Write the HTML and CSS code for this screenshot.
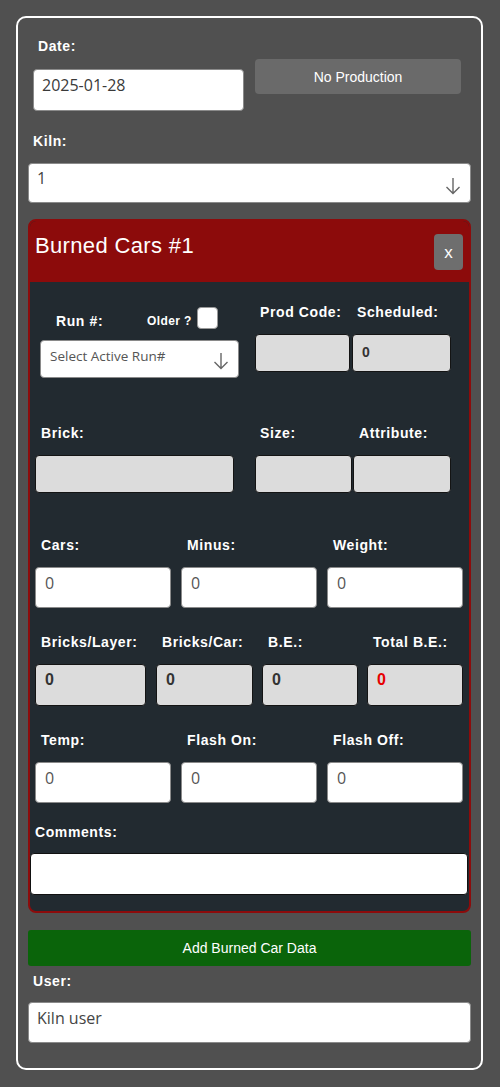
FILE: index.html
```html
<!DOCTYPE html>
<html>
<head>
<meta charset="utf-8">
<link rel="stylesheet" href="styles.css">
</head>
<body>
<div class="panel">
  <div class="date-row">
    <div class="date-col">
      <div class="lbl pad5">Date:</div>
      <div class="inp date-inp">2025-01-28</div>
    </div>
    <div class="noprod">No Production</div>
  </div>
  <div class="lbl kiln-lbl">Kiln:</div>
  <div class="inp sel kiln-sel"><span>1</span><svg class="arrow" width="16" height="18" viewBox="0 0 16 18"><path d="M8 1V16.5M1.5 10L8 16.5L14.5 10" fill="none" stroke="#666" stroke-width="1.4"/></svg></div>

  <div class="card">
    <div class="card-head">
      <div class="title">Burned Cars #1</div>
      <div class="close">x</div>
    </div>
    <div class="card-body">
      <div class="row run-row">
        <div class="run-col">
          <div class="run-head">
            <div class="lbl run-lbl">Run #:</div>
            <div class="older">Older ?</div>
            <div class="chk"></div>
          </div>
          <div class="inp sel run-sel"><span>Select Active Run#</span><svg class="arrow" width="16" height="18" viewBox="0 0 16 18"><path d="M8 1V16.5M1.5 10L8 16.5L14.5 10" fill="none" stroke="#666" stroke-width="1.4"/></svg></div>
        </div>
        <div class="fld prod">
          <div class="lbl pad5">Prod Code:</div>
          <div class="ro h38"></div>
        </div>
        <div class="fld sched">
          <div class="lbl pad5">Scheduled:</div>
          <div class="ro h38 val14">0</div>
        </div>
      </div>

      <div class="row brick-row">
        <div class="fld w199">
          <div class="lbl pad6">Brick:</div>
          <div class="ro h38"></div>
        </div>
        <div class="fld size">
          <div class="lbl pad5">Size:</div>
          <div class="ro h38"></div>
        </div>
        <div class="fld attr">
          <div class="lbl pad6">Attribute:</div>
          <div class="ro h38"></div>
        </div>
      </div>

      <div class="row three cars-row">
        <div class="fld w136">
          <div class="lbl pad6">Cars:</div>
          <div class="inp num">0</div>
        </div>
        <div class="fld w136">
          <div class="lbl pad6">Minus:</div>
          <div class="inp num">0</div>
        </div>
        <div class="fld w136">
          <div class="lbl pad6">Weight:</div>
          <div class="inp num">0</div>
        </div>
      </div>

      <div class="row bricks-row">
        <div class="fld b1">
          <div class="lbl pad6">Bricks/Layer:</div>
          <div class="ro h42 val15">0</div>
        </div>
        <div class="fld b2">
          <div class="lbl pad6">Bricks/Car:</div>
          <div class="ro h42 val15">0</div>
        </div>
        <div class="fld b3">
          <div class="lbl pad6">B.E.:</div>
          <div class="ro h42 val15">0</div>
        </div>
        <div class="fld b4">
          <div class="lbl pad6">Total B.E.:</div>
          <div class="ro h42 val15 red">0</div>
        </div>
      </div>

      <div class="row three temp-row">
        <div class="fld w136">
          <div class="lbl pad6">Temp:</div>
          <div class="inp num">0</div>
        </div>
        <div class="fld w136">
          <div class="lbl pad6">Flash On:</div>
          <div class="inp num">0</div>
        </div>
        <div class="fld w136">
          <div class="lbl pad6">Flash Off:</div>
          <div class="inp num">0</div>
        </div>
      </div>

      <div class="comments">
        <div class="lbl pad5">Comments:</div>
        <div class="inp com-inp"></div>
      </div>
    </div>
  </div>

  <div class="add-btn">Add Burned Car Data</div>
  <div class="lbl user-lbl">User:</div>
  <div class="inp user-inp">Kiln user</div>
</div>
</body>
</html>
```

FILE: styles.css
```css
* { box-sizing: border-box; }
html, body { margin: 0; padding: 0; }
body {
  background: #505050;
  width: 500px;
  height: 1087px;
  overflow: hidden;
  padding: 16px 0 0 16px;
  font-family: "Liberation Sans", Arial, sans-serif;
}
.panel {
  width: 467px;
  height: 1054px;
  border: 2px solid #fff;
  border-radius: 10px;
  padding: 21px 10px 0 10px;
}
.lbl {
  color: #fff;
  font-weight: bold;
  font-size: 14px;
  line-height: 15px;
  letter-spacing: 0.6px;
  white-space: nowrap;
}
.pad5 { padding-left: 5px; }
.pad6 { padding-left: 6px; }

.inp {
  background: #fff;
  border: 1px solid #8a8a8a;
  border-radius: 4px;
  font-family: "Open Sans", sans-serif;
  font-size: 16px;
  line-height: 22px;
  color: #444;
  padding: 4px 0 0 8px;
}
.date-row { display: flex; }
.date-col { margin-left: 5px; width: 211px; }
.date-col .lbl { margin-bottom: 15px; }
.date-inp { height: 42px; padding-left: 8px; color: #3a3a3a; }
.noprod {
  margin-left: 11px;
  margin-top: 20px;
  width: 206px;
  height: 35px;
  background: #6a6a6a;
  border-radius: 4px;
  color: #fff;
  font-size: 14px;
  display: flex;
  align-items: center;
  justify-content: center;
}
.kiln-lbl { margin-top: 23px; padding-left: 5px; margin-bottom: 14px; }
.sel { display: flex; justify-content: space-between; align-items: flex-start; }
.kiln-sel { height: 40px; padding: 3px 9px 0 8px; }
.kiln-sel .arrow { margin-top: 10px; }

.card {
  margin-top: 16px;
  border: 2px solid #8c0b0b;
  border-radius: 8px;
  overflow: hidden;
  background: #222a30;
}
.card-head {
  background: #8c0b0b;
  height: 61px;
  display: flex;
  justify-content: space-between;
  align-items: flex-start;
  padding: 0 6px 0 5px;
}
.title {
  margin-top: 12px;
  color: #fff;
  font-size: 22px;
  line-height: 26px;
  letter-spacing: 0.35px;
}
.close {
  margin-top: 13px;
  width: 29px;
  height: 36px;
  background: #6e6e6e;
  border-radius: 4px;
  color: #fff;
  font-size: 17px;
  display: flex;
  align-items: center;
  justify-content: center;
  padding-top: 2px;
}
.card-body { padding-bottom: 16px; }
.row { display: flex; align-items: flex-start; }
.fld .lbl { margin-bottom: 14px; }

.ro {
  background: #dcdcdc;
  border: 1px solid #141414;
  border-radius: 4px;
  color: #333;
  font-weight: bold;
}
.h38 { height: 38px; }
.h42 { height: 42px; }
.val14 { font-size: 14px; line-height: 16px; padding: 9px 0 0 9px; }
.val15 { font-size: 16px; line-height: 18px; padding: 6px 0 0 9px; }
.red { color: #e60000; }

.run-row { padding-left: 10px; }
.run-col { width: 199px; padding-top: 25px; }
.run-head { display: flex; align-items: flex-end; height: 22px; margin-bottom: 11px; }
.run-lbl { width: 107px; padding-left: 16px; }
.older { color: #fff; font-weight: bold; font-size: 12px; line-height: 15px; width: 50px; letter-spacing: 0.4px; }
.chk {
  width: 21px;
  height: 22px;
  background: #fff;
  border: 1px solid #999;
  border-radius: 4px;
}
.run-sel {
  height: 38px;
  font-size: 13.5px;
  line-height: 18px;
  color: #555;
  padding: 6px 9px 0 9px;
}
.run-sel .arrow { margin-top: 5px; }
.prod { margin-left: 16px; width: 95px; padding-top: 23px; }
.sched { margin-left: 2px; width: 99px; padding-top: 23px; }

.brick-row { margin-top: 48px; padding-left: 5px; }
.w199 { width: 199px; }
.size { margin-left: 21px; width: 97px; }
.attr { margin-left: 1px; width: 98px; }

.three { padding-left: 5px; gap: 10px; }
.w136 { width: 136px; }
.cars-row { margin-top: 45px; }
.num { height: 41px; padding-left: 9px; color: #555; }

.bricks-row { margin-top: 27px; padding-left: 5px; }
.b1 { width: 111px; }
.b2 { margin-left: 10px; width: 97px; }
.b3 { margin-left: 9px; width: 96px; }
.b4 { margin-left: 9px; width: 96px; }

.temp-row { margin-top: 27px; }

.comments { margin-top: 22px; }
.comments .lbl { margin-bottom: 13px; }
.com-inp { height: 42px; width: 438px; border-color: #111; }

.add-btn {
  margin-top: 17px;
  height: 36px;
  background: #0a640a;
  border-radius: 3px;
  color: #fff;
  font-size: 14px;
  display: flex;
  align-items: center;
  justify-content: center;
}
.user-lbl { margin-top: 8px; padding-left: 5px; margin-bottom: 13px; }
.user-inp { height: 41px; padding-left: 8px; color: #444; }
```
